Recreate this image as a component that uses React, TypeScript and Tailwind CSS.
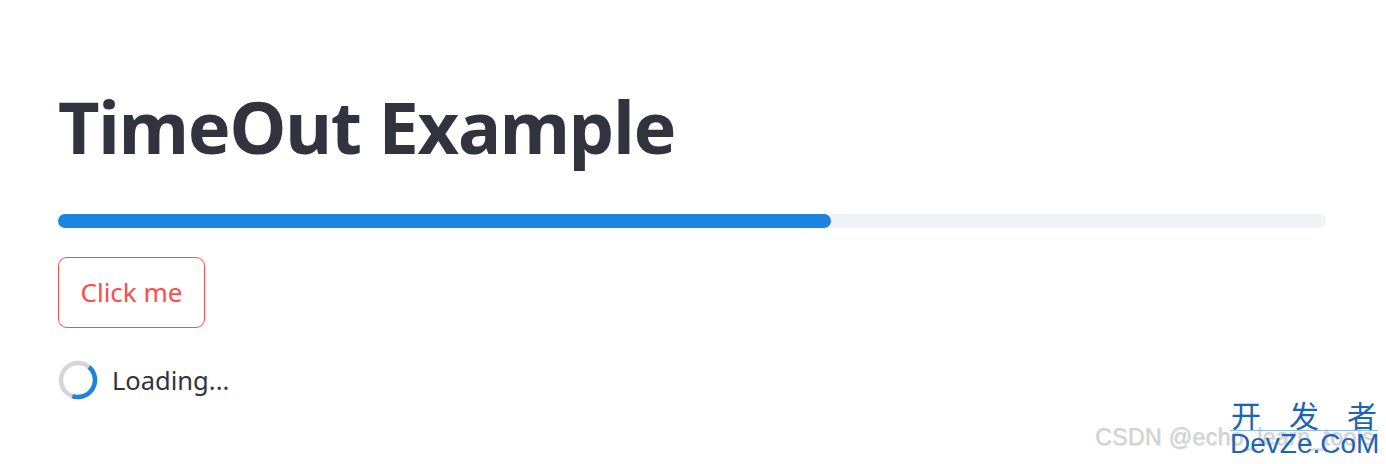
import React from 'react';

const Spinner = () => (
  <svg width="40" height="40" viewBox="0 0 40 40" className="shrink-0">
    <circle cx="20" cy="20" r="17" fill="none" stroke="#d6d6d8" strokeWidth="4.5" />
    <path d="M20 3 A17 17 0 0 1 26 35.9" fill="none" stroke="#1c83e1" strokeWidth="4.5" transform="rotate(40 20 20)" />
  </svg>
);

const App = () => {
  const progress = 61;

  return (
    <div className="relative w-[1386px] h-[464px] bg-white overflow-hidden font-['Noto_Sans',sans-serif] text-[#31333f]">
      <div className="pl-[58px] pr-[60px] pt-[78px]">
        <h1 className="text-[72px] font-bold leading-[96px] tracking-[-1.2px]">TimeOut Example</h1>

        <div className="mt-[40px] h-[14px] w-full rounded-full bg-[#f0f2f6]">
          <div className="h-full rounded-full bg-[#1c83e1]" style={{ width: `${progress}%` }} />
        </div>

        <button className="mt-[29px] flex h-[71px] w-[147px] items-center justify-center rounded-[9px] border border-[#ff4b4b] bg-white text-[26px] text-[#ff4b4b]">
          Click me
        </button>

        <div className="mt-[32px] flex items-center gap-[14px]">
          <Spinner />
          <span className="text-[25.5px]">Loading...</span>
        </div>
      </div>

      {/* watermark */}
      <div className="absolute left-[1095px] bottom-[10px] whitespace-nowrap">
        <span className="font-['Liberation_Sans',sans-serif] text-[23px] tracking-[0.4px] text-[#d2d2d2] [text-shadow:1px_1px_0_#e4e4e4]">
          CSDN @echo_learn_tools
        </span>
      </div>
      <div className="absolute right-[8px] bottom-[7px] flex w-[148px] flex-col text-[#1b64b8]">
        <div className="flex justify-between px-[1px] font-['Noto_Sans_CJK_SC',sans-serif] text-[30px] leading-[31px]">
          <span>开</span>
          <span>发</span>
          <span>者</span>
        </div>
        <span className="border-t border-[#8dbbe3] font-['Liberation_Sans',sans-serif] text-[28px] leading-[26px]">DevZe.CoM</span>
      </div>
    </div>
  );
};

export default App;
